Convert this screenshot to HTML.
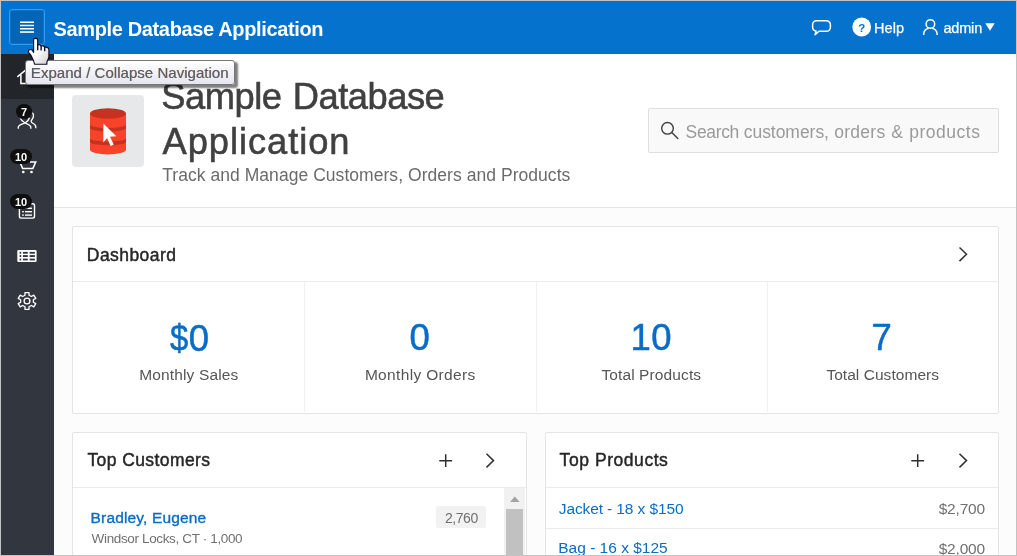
<!DOCTYPE html>
<html lang="en">
<head>
<meta charset="utf-8">
<title>Sample Database Application</title>
<style>
*{box-sizing:border-box;margin:0;padding:0}
html,body{width:1017px;height:556px;overflow:hidden;background:#fff}
body{position:relative;font-family:"Liberation Sans",sans-serif;color:#404040}
.abs{position:absolute}
.t{position:absolute;white-space:nowrap;line-height:1}
#page{position:absolute;left:0;top:0;width:1017px;height:556px;will-change:transform}
#frame-t{left:0;top:0;width:1017px;height:1px;background:#c2c2c2}
#frame-l{left:0;top:0;width:1px;height:556px;background:#c2c2c2}
#frame-b{left:0;top:555px;width:1017px;height:1px;background:#c2c2c2}
#frame-r{left:1016px;top:0;width:1px;height:556px;background:#c2c2c2}
#hdr{left:1px;top:1px;width:1015px;height:53px;background:#0572ce}
#navbtn{left:9px;top:9px;width:36px;height:36px;background:#0464b6;border:1px solid #2f9bf7;border-radius:3px;box-shadow:inset 0 0 0 .5px rgba(47,155,247,.5)}
#side{left:1px;top:54px;width:53px;height:501px;background:#32363e}
#side .act{left:0;top:0;width:53px;height:45px;background:#22262a}
#main{left:54px;top:54px;width:962px;height:501px;background:#fcfcfc}
#hero{left:0;top:0;width:962px;height:154px;background:#fff;border-bottom:1px solid #e6e6e6}
.card{position:absolute;background:#fff;border:1px solid #e4e4e4;border-radius:2px}
.hline{position:absolute;height:1px;background:#ebebeb}
.vline{position:absolute;width:1px;background:#f0f0f0}
.h2{font-size:17.5px;font-weight:normal;color:#262626;-webkit-text-stroke:.45px #262626}
.big{font-size:36.5px;color:#0a6cc6;-webkit-text-stroke:.5px #0a6cc6}
.lbl{font-size:15.5px;color:#555}
.lnk{color:#0a6cc6}
.badge{background:#0f0f10;border-radius:8px;color:#fff;font-weight:bold;font-size:11px;text-align:center;line-height:15px}
.badge span{display:block;position:relative;top:1px}
</style>
</head>
<body>
<div id="page">
<div class="abs" id="hdr"></div>
<div class="abs" id="navbtn"></div>
<div class="t" id="apptitle" style="left:53.53px;top:19px;font-size:20px;font-weight:bold;color:#fff;letter-spacing:-0.358px">Sample Database Application</div>
<div class="t" id="help" style="-webkit-text-stroke:.25px #fff;left:874.05px;top:21px;font-size:14.5px;color:#fff;letter-spacing:0.068px">Help</div>
<div class="t" id="admin" style="-webkit-text-stroke:.25px #fff;left:943.41px;top:21px;font-size:14.5px;color:#fff;letter-spacing:-0.168px">admin</div>

<div class="abs" id="side"><div class="abs act"></div></div>

<div class="abs" id="main">
  <div class="abs" id="hero"></div>
</div>

<div class="abs" id="iconbox" style="left:72px;top:95px;width:72px;height:72px;background:#e6e8ea;border-radius:4px"></div>
<div class="t" id="h1a" style="word-spacing:1.6px;-webkit-text-stroke:.55px #404040;left:161.36px;top:79px;font-size:36.3px;color:#404040;letter-spacing:-0.48px">Sample Database</div>
<div class="t" id="h1b" style="-webkit-text-stroke:.55px #404040;left:162.51px;top:124px;font-size:36.3px;color:#404040;letter-spacing:0.945px">Application</div>
<div class="t" id="sub" style="left:162.22px;top:167px;font-size:17.5px;color:#6b6b6b;letter-spacing:0.047px">Track and Manage Customers, Orders and Products</div>

<div class="abs" id="search" style="left:648px;top:108px;width:351px;height:45px;background:#f9f9f9;border:1px solid #dedede;border-radius:2px"></div>
<div class="t" id="ph1" style="left:685.61px;top:124px;font-size:17.5px;color:#9a9a9a;letter-spacing:-0.355px">Search</div><div class="t" id="ph2" style="left:743.74px;top:124px;font-size:17.5px;color:#9a9a9a;letter-spacing:-0.039px">customers,</div><div class="t" id="ph3" style="left:834.32px;top:124px;font-size:17.5px;color:#9a9a9a;letter-spacing:0.248px">orders</div><div class="t" id="ph4" style="left:891.3px;top:124px;font-size:17.5px;color:#9a9a9a">&amp;</div><div class="t" id="ph5" style="left:909.34px;top:124px;font-size:17.5px;color:#9a9a9a;letter-spacing:0.491px">products</div>

<div class="card" id="dash" style="left:72px;top:226px;width:927px;height:188px"></div>
<div class="hline" style="left:73px;top:281px;width:925px"></div>
<div class="vline" style="left:304px;top:282px;height:130px"></div>
<div class="vline" style="left:536px;top:282px;height:130px"></div>
<div class="vline" style="left:767px;top:282px;height:130px"></div>
<div class="t h2" id="dashT" style="left:86.83px;top:247px;letter-spacing:0.433px">Dashboard</div>

<div class="card" id="cust" style="left:72px;top:432px;width:455px;height:140px"></div>
<div class="hline" style="left:73px;top:487px;width:453px"></div>
<div class="t h2" id="custT" style="left:87.45px;top:452px;letter-spacing:0.413px">Top Customers</div>

<div class="card" id="prod" style="left:545px;top:432px;width:454px;height:140px"></div>
<div class="hline" style="left:546px;top:487px;width:452px"></div>
<div class="hline" style="left:546px;top:528px;width:452px"></div>
<div class="t h2" id="prodT" style="left:559.62px;top:452px;letter-spacing:0.556px">Top Products</div>


<!-- header icons -->
<svg class="abs" id="burger" style="left:9px;top:9px" width="36" height="36" viewBox="0 0 36 36"><g fill="#fff"><rect x="11" y="12.5" width="14" height="1.5"/><rect x="11" y="15.75" width="14" height="1.5"/><rect x="11" y="19" width="14" height="1.5"/><rect x="11" y="22.25" width="14" height="1.6"/></g></svg>
<svg class="abs" id="ic-comment" style="left:808px;top:16px" width="28" height="24" viewBox="0 0 28 24"><path d="M8.700 4.700h9.600a4.100 4.100 0 0 1 4.100 4.100v2.400a4.100 4.100 0 0 1-4.100 4.100h-7.300l-3.900 3.400 .9-3.600a4.100 4.100 0 0 1-3.400-4v-2.300a4.100 4.100 0 0 1 4.100-4.100z" fill="none" stroke="#fff" stroke-width="1.500" stroke-linejoin="round"/></svg>
<svg class="abs" id="ic-help" style="left:850px;top:15px" width="24" height="24" viewBox="0 0 24 24"><circle cx="11.7" cy="12" r="9.4" fill="#fff"/><text x="11.800" y="16.800" text-anchor="middle" font-family="Liberation Sans, sans-serif" font-weight="bold" font-size="11.500" fill="#0572ce">?</text></svg>
<svg class="abs" id="ic-user" style="left:920px;top:16px" width="22" height="22" viewBox="0 0 22 22"><g fill="none" stroke="#fff" stroke-width="1.5"><circle cx="10.4" cy="8" r="4.3"/><path d="M3.7 19v-1.2c0-3 2.6-5.2 5-5.5M17.1 19v-1.2c0-3-2.6-5.2-5-5.5"/></g></svg>
<svg class="abs" id="ic-caret" style="left:984px;top:22px" width="12" height="10" viewBox="0 0 12 10"><path d="M1.3 1.3h9.4L6 8.8z" fill="#fff"/></svg>

<!-- sidebar icons -->
<svg class="abs" id="ic-home" style="left:14px;top:64px" width="26" height="26" viewBox="0 0 26 26"><g fill="none" stroke="#fff" stroke-width="1.5" stroke-linejoin="miter"><path d="M3.3 12.9L13 5l9.7 7.9"/><path d="M6.9 10.5v9h12.2v-9"/></g></svg>
<svg class="abs" id="ic-users" style="left:14px;top:108px" width="26" height="26" viewBox="0 0 26 26"><g fill="none" stroke="#fff" stroke-width="1.350" stroke-linecap="butt"><path d="M6.200 10.300C7.500 13 9.500 14 11.100 14.900C13.500 16.200 16.600 16.800 16.800 19V20.800"/><path d="M15.400 9.700C14.600 12.500 13 14 11.100 14.900C8.500 16.200 4.600 16.500 4.300 19V20.800"/><path d="M18.400 4.800C20 6 19.800 9.500 18 11.500C16.500 13.300 17.200 14.300 18.500 15C20.500 16 21.800 17 21.800 19V20.300"/></g></svg>
<svg class="abs" id="ic-cart" style="left:14px;top:153px" width="26" height="26" viewBox="0 0 26 26"><path d="M6.500 10.500L8.600 15.400H18.900L21.700 9H16" fill="none" stroke="#fff" stroke-width="1.550" stroke-linejoin="miter"/><circle cx="9.300" cy="19" r="1.350" fill="#fff"/><circle cx="17.500" cy="19" r="1.350" fill="#fff"/></svg>
<svg class="abs" id="ic-orders" style="left:14px;top:198px" width="26" height="26" viewBox="0 0 26 26"><rect x="5.400" y="5.700" width="15.100" height="14.400" rx="1.800" fill="none" stroke="#fff" stroke-width="1.400"/><g fill="#fff"><rect x="8.200" y="9.600" width="1.600" height="1.400"/><rect x="11" y="9.600" width="7" height="1.400"/><rect x="8.200" y="13" width="1.600" height="1.400"/><rect x="11" y="13" width="7" height="1.400"/><rect x="8.200" y="16.400" width="1.600" height="1.400"/><rect x="11" y="16.400" width="7" height="1.400"/></g></svg>
<svg class="abs" id="ic-table" style="left:14px;top:243px" width="26" height="26" viewBox="0 0 26 26"><rect x="3.300" y="7" width="19.300" height="11.900" rx="1.200" fill="#fff"/><g fill="#32363e"><rect x="5.600" y="8.900" width="1.600" height="1.800"/><rect x="8.900" y="8.900" width="4.900" height="1.800"/><rect x="15.600" y="8.900" width="5.300" height="1.800"/><rect x="5.600" y="12.100" width="1.600" height="1.900"/><rect x="8.900" y="12.100" width="4.900" height="1.900"/><rect x="15.600" y="12.100" width="5.300" height="1.900"/><rect x="5.600" y="15.600" width="1.600" height="1.800"/><rect x="8.900" y="15.600" width="4.900" height="1.800"/><rect x="15.600" y="15.600" width="5.300" height="1.800"/></g></svg>
<svg class="abs" id="ic-gear" style="left:14px;top:288px" width="26" height="26" viewBox="0 0 26 26"><g fill="none" stroke="#fff" stroke-width="1.350" stroke-linejoin="round"><path d="M10.99 7.22 L11.01 4.60 L14.99 4.60 L15.01 7.22 L17.35 8.48 L19.78 7.19 L21.77 10.41 L19.36 11.74 L19.36 14.26 L21.77 15.59 L19.78 18.81 L17.35 17.52 L15.01 18.78 L14.99 21.40 L11.01 21.40 L10.99 18.78 L8.65 17.52 L6.22 18.81 L4.23 15.59 L6.64 14.26 L6.64 11.74 L4.23 10.41 L6.22 7.19 L8.65 8.48Z"/><circle cx="13" cy="13" r="2.900"/></g></svg>
<div class="abs badge" style="left:16px;top:104px;width:16px;height:15px"><span>7</span></div>
<div class="abs badge" style="left:10px;top:149px;width:22px;height:15px"><span>10</span></div>
<div class="abs badge" style="left:10px;top:194px;width:22px;height:15px"><span>10</span></div>

<!-- app icon -->
<svg class="abs" id="ic-db" style="left:72px;top:95px" width="72" height="72" viewBox="0 0 72 72">
<path d="M18 18.500V54.800A18 4.600 0 0 0 54 54.800V18.500z" fill="#f8432a"/>
<ellipse cx="36" cy="18.500" rx="18" ry="5.300" fill="#c5321f"/>
<path d="M18 29.500A18 3.400 0 0 0 54 29.500V33.100A18 3.400 0 0 1 18 33.100z" fill="#c5321f"/>
<path d="M18 43.200A18 3.400 0 0 0 54 43.200V46.900A18 3.400 0 0 1 18 46.900z" fill="#c5321f"/>
<path d="M31.400 28.600L44.300 41.300l-6.300.500 3.700 7.700-3.100 1.400-3.500-7.800-3.800 4.300z" fill="#fff"/>
</svg>

<!-- search icon -->
<svg class="abs" id="ic-search" style="left:658px;top:119px" width="24" height="24" viewBox="0 0 24 24"><g fill="none" stroke="#404040" stroke-width="1.400" stroke-linecap="round"><circle cx="9.500" cy="9.300" r="5.800"/><path d="M13.800 13.600l6 5.800"/></g></svg>

<!-- dashboard -->
<svg class="abs chev" style="left:955px;top:244px" width="16" height="20" viewBox="0 0 16 20"><path d="M4.500 3.500l7 6.800-7 6.800" fill="none" stroke="#303030" stroke-width="1.500"/></svg>
<div class="t big" id="n1" style="left:170.18px;top:321px;letter-spacing:-1.651px"><span style="display:inline-block;transform:scaleX(.9);transform-origin:0 50%">$</span>0</div>
<div class="t big" id="n2" style="left:409.4px;top:320px">0</div>
<div class="t big" id="n3" style="left:630.49px;top:320px;letter-spacing:0.441px">10</div>
<div class="t big" id="n4" style="left:871.6px;top:320px">7</div>
<div class="t lbl" id="l1" style="left:139.27px;top:367px;letter-spacing:0.134px">Monthly Sales</div>
<div class="t lbl" id="l2" style="left:364.88px;top:367px;letter-spacing:0.336px">Monthly Orders</div>
<div class="t lbl" id="l3" style="left:601.38px;top:367px;letter-spacing:0.114px">Total Products</div>
<div class="t lbl" id="l4" style="left:826.38px;top:367px;letter-spacing:0.048px">Total Customers</div>

<!-- top customers -->
<svg class="abs" style="left:437px;top:452px" width="18" height="18" viewBox="0 0 18 18"><path d="M8.700 2.300v12.800M2.300 8.700h12.800" fill="none" stroke="#303030" stroke-width="1.500"/></svg>
<svg class="abs chev" style="left:482px;top:450px" width="16" height="20" viewBox="0 0 16 20"><path d="M4.500 3.800l7 6.800-7 6.800" fill="none" stroke="#303030" stroke-width="1.500"/></svg>
<div class="t lnk" id="c1" style="-webkit-text-stroke:.35px #0a6cc6;left:90.59px;top:510px;font-size:15.5px;letter-spacing:0.157px">Bradley, Eugene</div>
<div class="t" id="c1s" style="left:91.62px;top:532px;font-size:13.500px;color:#707070;letter-spacing:-0.357px">Windsor Locks, CT · 1,000</div>
<div class="abs" id="bdg" style="left:436px;top:506px;width:50px;height:22px;background:#f2f2f2;border-radius:2px"></div>
<div class="t" id="bdgT" style="left:444.9px;top:511px;font-size:14px;color:#707070;letter-spacing:-0.434px">2,760</div>
<div class="abs" id="sbtrack" style="left:504px;top:488px;width:21px;height:67px;background:#f1f1f1"></div>
<div class="abs" id="sbthumb" style="left:506px;top:509px;width:17px;height:46px;background:#c1c1c1"></div>
<svg class="abs" style="left:508px;top:494px" width="14" height="10" viewBox="0 0 14 10"><path d="M2 8l4.800-5.500L11.600 8z" fill="#a3a3a3"/></svg>

<!-- top products -->
<svg class="abs" style="left:909px;top:452px" width="18" height="18" viewBox="0 0 18 18"><path d="M8.700 2.300v12.800M2.300 8.700h12.800" fill="none" stroke="#303030" stroke-width="1.500"/></svg>
<svg class="abs chev" style="left:955px;top:450px" width="16" height="20" viewBox="0 0 16 20"><path d="M4.500 3.800l7 6.800-7 6.800" fill="none" stroke="#303030" stroke-width="1.500"/></svg>
<div class="t lnk" id="p1" style="left:558.77px;top:501px;font-size:15.500px;letter-spacing:-0.109px">Jacket - 18 x $150</div>
<div class="t" id="p1v" style="left:938.69px;top:501px;font-size:15.500px;color:#707070;letter-spacing:-0.183px">$2,700</div>
<div class="t lnk" id="p2" style="left:558.27px;top:540px;font-size:15.500px;letter-spacing:-0.001px">Bag - 16 x $125</div>
<div class="t" id="p2v" style="left:938.69px;top:541px;font-size:15.500px;color:#707070;letter-spacing:-0.183px">$2,000</div>

</div>
<!-- tooltip + cursor -->
<div class="abs" id="tip" style="left:25px;top:60px;width:210px;height:25px;border:1px solid #767676;border-radius:3px;background:linear-gradient(#ffffff,#e4e5f0);box-shadow:2.5px 2.5px 2px rgba(0,0,0,.5)"></div>
<div class="t" id="tipT" style="text-shadow:-.3px 0 0 rgba(235,150,60,.55),.3px 0 0 rgba(60,120,235,.55);left:30.85px;top:65px;font-size:15px;color:#5e5e5e;letter-spacing:0.035px">Expand / Collapse Navigation</div>
<svg class="abs" id="cursor" style="left:26px;top:36px" width="26" height="30" viewBox="0 0 26 30"><defs><linearGradient id="hg" x1="0" y1="0" x2="1" y2="1"><stop offset="0.45" stop-color="#fff"/><stop offset="1" stop-color="#cfcfd4"/></linearGradient></defs><path d="M7.600 16.400V3.600C7.600 2 11.700 2 11.700 3.600V9.300C11.900 8.100 15.100 8.300 15.100 10.300C15.500 9.300 18.700 9.700 18.700 11.600C19.200 10.800 22.900 11.100 22.900 13.500V20.800C22.900 23 21.200 24.500 20.900 26V28.200H8.500C8.200 26 7.300 24 6.500 22.500C5.700 20.800 4.800 18.600 3 17C2.300 16.300 2.300 14.600 3 14C3.700 13.500 5.300 13.500 6 14C6.600 14.500 7.200 15.400 7.600 16.400z" fill="url(#hg)" stroke="#0b0b24" stroke-width="1.150" stroke-linejoin="round"/><path d="M11.700 9v5.200M15.100 10.300v4.200M18.700 11.800v3.500" fill="none" stroke="#0b0b24" stroke-width="1.350"/></svg>

<div class="abs" id="frame-t"></div><div class="abs" id="frame-l"></div><div class="abs" id="frame-b"></div><div class="abs" id="frame-r"></div>
</body>
</html>
